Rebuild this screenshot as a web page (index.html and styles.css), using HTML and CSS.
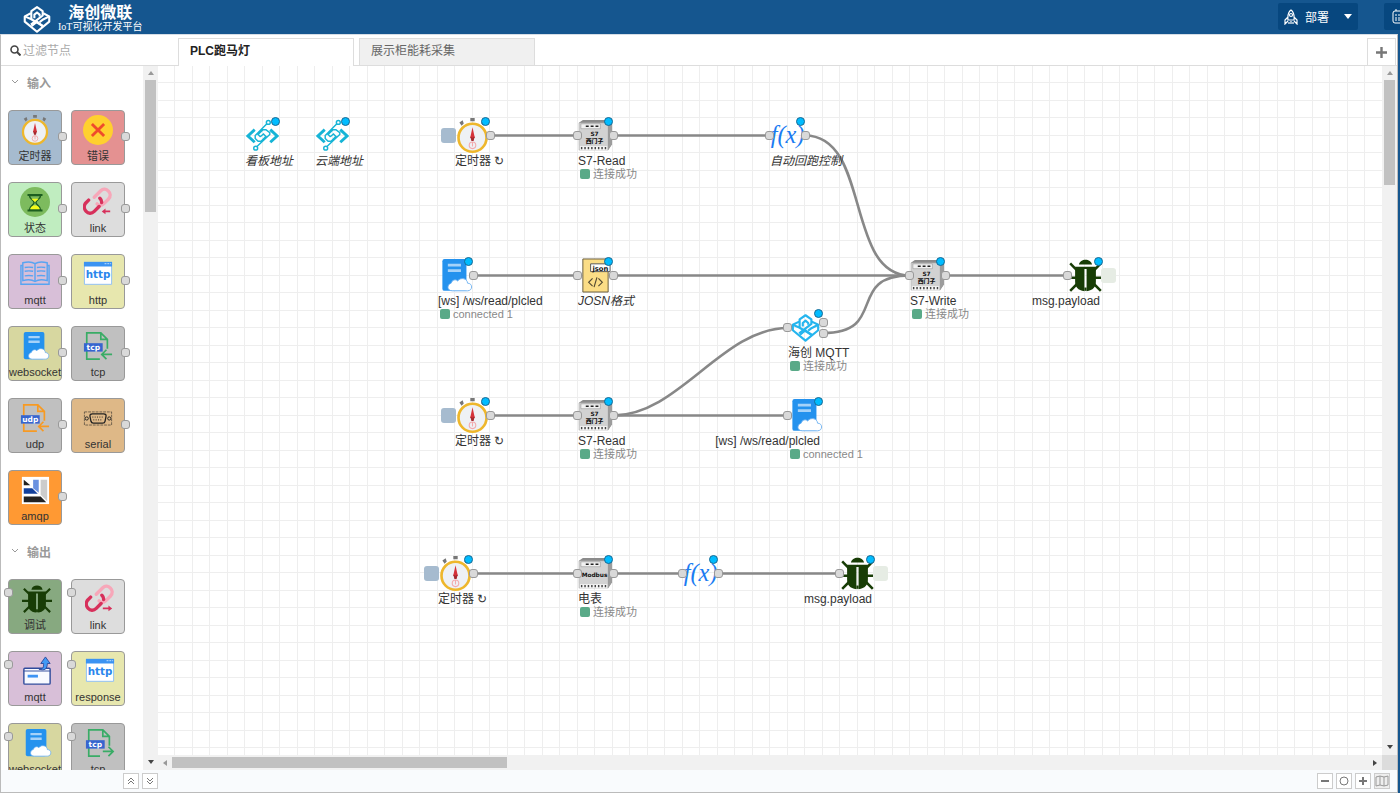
FILE: index.html
```html
<!DOCTYPE html>
<html lang="zh-CN">
<head>
<meta charset="utf-8">
<title>海创微联 IoT可视化开发平台</title>
<link rel="stylesheet" href="styles.css">
</head>
<body>
<svg class="sprite" width="0" height="0" aria-hidden="true">
  <symbol id="i-logo" viewBox="0 0 32 32"><g fill="none" stroke="currentColor" stroke-width="2.400" stroke-linejoin="round"><path d="M9 9.500L2 13v6l14 11.500L30 19v-6l-7-3.500"/><path d="M9.500 16V7L16 2.500 22.500 7v5L9 22.500"/><path d="M13 15v-4l3-2.500 3 2.500v2"/><path d="M2 13l7 3 14 8M30 13l-7 3.500-4 3"/><path d="M10 24l6-5 6.500 5.500"/></g></symbol>
  <symbol id="i-timer" viewBox="0 0 32 32"><path d="M14 0h4v3h-4z M4 4l3-2 1 3-2 2z M25 2l3 2-2 3-2-2z" fill="#777"/><circle cx="16" cy="18" r="12.800" fill="#eef1f5" stroke="#eeb72c" stroke-width="2.400"/><path d="M16 8.500l2 9-2 3-2-3z" fill="#d5323a"/><path d="M16 18l2-1-1 4h-2l-1-4z" fill="#a5292f"/><circle cx="16" cy="25" r="3" fill="none" stroke="#f3a9ac"/><path d="M16 22v4" stroke="#f3a9ac"/></symbol>
  <symbol id="i-error" viewBox="0 0 32 32"><circle cx="16" cy="16" r="16" fill="#ffd02f"/><path d="M9.500 9.500l13 13M22.500 9.500l-13 13" stroke="#ef4b2c" stroke-width="3"/></symbol>
  <symbol id="i-state" viewBox="0 0 32 32"><circle cx="16" cy="16" r="16" fill="#7dbb5e"/><path d="M10 9h12c0 4-5 5-5 7.500s5 4 5 8H10c0-4 5-5.500 5-8S10 13 10 9z" fill="#7dbb5e" stroke="#1d5e20" stroke-width="1.500"/><path d="M12 12.500h8L16 16zM11 24c0-4 5-4.500 5-4.500s5 .5 5 4.500z" fill="#f4fb18"/><path d="M8 8.500h16M8 25h16" stroke="#1d5e20" stroke-width="2"/></symbol>
  <symbol id="i-link" viewBox="0 0 32 32"><g fill="none" stroke-width="3.600" stroke-linecap="round"><path d="M12 11l7-7c5-5 14 3 8 9l-5 5c-2 2-5 2-7 0" stroke="#f7a7b9"/><path d="M6 14l-3 3c-5 6 3 15 9 9l6-6c3-3 2-6 0-8" stroke="#d7305b" stroke-dasharray="31 5 20"/></g></symbol>
  <symbol id="i-linkin" viewBox="0 0 32 32"><use href="#i-link"/><path d="M20 26l4-3v2h5v2h-5v2z" fill="#d7305b"/></symbol>
  <symbol id="i-linkout" viewBox="0 0 32 32"><use href="#i-link"/><path d="M29 26l-4-3v2h-6v2h6v2z" fill="#d7305b"/></symbol>
  <symbol id="i-book" viewBox="0 0 32 32"><g fill="none" stroke="#57a4f2" stroke-width="1.500"><path d="M16 5c-3-2-9-2-13-1v19c4-1 10-1 13 1 3-2 9-2 13-1V4c-4-1-10-1-13 1zM16 5v19"/><path d="M3 7H1v20h30V7h-2M5 9c3-.5 6-.5 9 0M5 13c3-.5 6-.5 9 0M5 18c3-.5 6-.5 9 0M18 9c3-.5 6-.5 9 0M18 13c3-.5 6-.5 9 0M18 18c3-.5 6-.5 9 0"/></g></symbol>
  <symbol id="i-http" viewBox="0 0 32 32"><path d="M1.500 4h29v23h-29z" fill="#fff" stroke="#8dbef5"/><path d="M1 3h30v5H1z" fill="#3b93f2"/><path d="M23 5h2M26 5h2M29 5h1" stroke="#c8e2ff"/><text class="t-http" x="16" y="20" text-anchor="middle">http</text></symbol>
  <symbol id="i-ws" viewBox="0 0 32 32"><rect x="4" y="1" width="22" height="29" rx="2" fill="#2492ee"/><path d="M9 6.500h12M9 11.500h12" stroke="#a5d2f9" stroke-width="2.600"/><path d="M13 30c-5 0-5-6-1-7 1-3 4-4 6-2 3-4 9-2 9 2 5 0 5 7 0 7z" fill="#fff" stroke="#67aef0" stroke-width=".8"/></symbol>
  <symbol id="i-file" viewBox="0 0 32 32"><path d="M26 19V9l-7-7H4v28h14M19 2v7h7M21 25h10M25 20l-5 5 5 5" fill="none" stroke="currentColor" stroke-width="1.800"/></symbol>
  <symbol id="i-fileout" viewBox="0 0 32 32"><path d="M26 19V9l-7-7H4v28h12M19 2v7h7M19 25h11M25 20l5 5-5 5" fill="none" stroke="currentColor" stroke-width="1.800"/></symbol>
  <symbol id="i-tcp" viewBox="0 0 32 32"><use href="#i-file" color="#39ac66"/><path d="M1 13h20v9H1z" fill="#3765cf"/><text class="t-tag" x="11" y="20" text-anchor="middle">tcp</text></symbol>
  <symbol id="i-tcpout" viewBox="0 0 32 32"><use href="#i-fileout" color="#39ac66"/><path d="M1 13h20v9H1z" fill="#3765cf"/><text class="t-tag" x="11" y="20" text-anchor="middle">tcp</text></symbol>
  <symbol id="i-udp" viewBox="0 0 32 32"><use href="#i-file" color="#f79a23"/><path d="M1 13h20v9H1z" fill="#3765cf"/><text class="t-tag" x="11" y="20" text-anchor="middle">udp</text></symbol>
  <symbol id="i-serial" viewBox="0 0 32 32"><g fill="none" stroke="#222"><path d="M1.500 9.500h29v14h-29z" stroke-width=".6" stroke-dasharray="3 1"/><path d="M10 11.500h12c2 0 3 1 2.500 3l-1 5c-.4 2-1 2-2.500 2H11c-1.500 0-2 0-2.500-2l-1-5c-.4-2 .5-3 2.500-3z" stroke-width="1.400"/><circle cx="4" cy="16.500" r="1.700"/><circle cx="28" cy="16.500" r="1.700"/><path d="M10 15h12M11 18h10" stroke-dasharray="1 1.500"/></g></symbol>
  <symbol id="i-amqp" viewBox="0 0 32 32"><path d="M2 2h29v29H2z" fill="#fff"/><path d="M4 5l7 6H4z" fill="#222"/><path d="M14 5h6v14l-6-5z" fill="#6b92e0"/><path d="M4 14h9l6 6H4z" fill="#12409c"/><path d="M22 5h7v23l-7-7z" fill="#ccc"/><path d="M4 23h18l6 6H4z" fill="#222"/></symbol>
  <symbol id="i-bug" viewBox="0 0 32 32"><g fill="#183d06"><path d="M10 6c1-6 11-6 12 0zM6.500 8H15v22.500c-6-1-8.500-4-8.500-9zM17 8h8.500v13.500c0 5-2.500 8-8.500 9zM13.500 8h5v2h-5z"/><path d="M15 27h2v3h-2z"/></g><path d="M8 11L2 5M24 11l6-6M8 18H0M24 18h8M8 24l-6 6M24 24l6 6" stroke="#183d06" stroke-width="2.300"/></symbol>
  <symbol id="i-mqttout" viewBox="0 0 32 32"><rect x="2" y="13" width="28" height="17" rx="1" fill="#f8faff" stroke="#304b9c" stroke-width="1.500"/><path d="M2 16h28" stroke="#304b9c"/><path d="M6 20h11v3H6z" fill="#3d93f3"/><path d="M18 14c5 0 5-2 5-6h-3l5-7 5 7h-3c0 6-3 8-9 6z" fill="#419af5" stroke="#304b9c"/></symbol>
  <symbol id="i-plc" viewBox="0 0 36 36"><path d="M1 5l4-3h28l2 3v22l-4 6H1z" fill="#8b8b8b"/><path d="M1 5h30v28H1z" fill="#d2d2d2" stroke="#aaa" stroke-width=".5"/><path d="M31 5l4-3v25l-4 6z" fill="#9c9c9c"/><path d="M3 6h20v5H3z" fill="#f1f1f1" stroke="#888" stroke-width=".5"/><path d="M8 8.500h3M13 8.500h3M18 8.500h3" stroke="#222" stroke-width="1.500"/><path d="M2 29h28v4H2z" fill="#f5f5f5"/><path d="M3 31h26" stroke="#444" stroke-width="2.400" stroke-dasharray="1.500 2"/></symbol>
  <symbol id="i-s7" viewBox="0 0 36 36"><use href="#i-plc"/><text class="t-plc" x="17" y="19" text-anchor="middle">S7</text><text class="t-plc" x="17" y="26" text-anchor="middle">西门子</text></symbol>
  <symbol id="i-modbus" viewBox="0 0 36 36"><use href="#i-plc"/><text class="t-plc" x="17" y="22" text-anchor="middle">Modbus</text></symbol>
  <symbol id="i-json" viewBox="0 0 36 36"><path d="M5 1h26v34H5z" fill="#fbdd86" stroke="#665a3c"/><path d="M13 6h20v8H13z" fill="#fff" stroke="#555"/><text class="t-json" x="23" y="13" text-anchor="middle">json</text><path d="M15 21l-4 4 4 4M21 21l4 4-4 4M19.500 20l-3 10" fill="none" stroke="#554b33" stroke-width="1.200"/></symbol>
  <symbol id="i-fx" viewBox="0 0 36 36"><text class="t-fx" x="18" y="26" text-anchor="middle">f(x)</text></symbol>
  <symbol id="i-board" viewBox="0 0 36 36"><g fill="none" stroke="#16b4d6" stroke-width="1.500"><path d="M10 12l-7 6.500L10 25M26 12l7 6.500L26 25" stroke-width="3"/><path d="M22.500 6L10.500 18v3l3 3h3l5-5-2.500-2.500L16 19M12 29.500L25.500 17v-2l-4-3h-3l-5 5 2.500 2.500"/><circle cx="24" cy="4.500" r="2"/><circle cx="11" cy="31" r="2"/></g></symbol>
  <symbol id="i-rocket" viewBox="0 0 14 16"><g fill="none" stroke="#fff" stroke-width="1.200"><path d="M7 1C4 3 3.500 6 4 11h6c.5-5 0-8-3-10zM4 8l-3 3v4l3-3M10 8l3 3v4l-3-3M5 13v2M9 13v2M7 12v3"/><circle cx="7" cy="6" r="1.500"/></g></symbol>
</svg>

<header class="topbar">
  <div class="brand">
    <svg class="brand-mark"><use href="#i-logo"/></svg>
    <div class="brand-text"><strong>海创微联</strong><span>IoT可视化开发平台</span></div>
  </div>
  <div class="actions">
    <button class="deploy" type="button"><svg class="rocket"><use href="#i-rocket"/></svg><span>部署</span><i class="caret"></i></button>
    <button class="side" type="button" aria-label="面板"><svg width="14" height="15" viewBox="0 0 14 15" fill="none" stroke="#fff"><rect x="1" y="2" width="12" height="12" rx="2"/><path d="M4 0v3M10 0v3M3 6h8M3 9h8M3 11h8" stroke-dasharray="2 1"/></svg></button>
  </div>
</header>

<main class="workbench">
  <aside class="palette">
    <label class="search"><svg width="11" height="11" viewBox="0 0 11 11" fill="none" stroke="#444"><circle cx="4.500" cy="4.500" r="3.500" stroke-width="1.600"/><path d="M7 7l3.500 3.500" stroke-width="2"/></svg><input type="text" placeholder="过滤节点" aria-label="过滤节点"></label>
    <div class="palette-body">
      <div class="palette-list">
        <h2><svg width="8" height="6" viewBox="0 0 8 6"><path d="M1 1l3 3 3-3"/></svg>输入</h2>
        <div class="tiles">
          <div class="tile out c-timer"><svg><use href="#i-timer"/></svg><span>定时器</span></div>
          <div class="tile out c-error"><svg><use href="#i-error"/></svg><span>错误</span></div>
          <div class="tile out c-state"><svg><use href="#i-state"/></svg><span>状态</span></div>
          <div class="tile out c-link"><svg><use href="#i-linkin"/></svg><span>link</span></div>
          <div class="tile out c-mqtt"><svg><use href="#i-book"/></svg><span>mqtt</span></div>
          <div class="tile out c-http"><svg><use href="#i-http"/></svg><span>http</span></div>
          <div class="tile out c-ws"><svg><use href="#i-ws"/></svg><span>websocket</span></div>
          <div class="tile out c-net"><svg><use href="#i-tcp"/></svg><span>tcp</span></div>
          <div class="tile out c-net"><svg><use href="#i-udp"/></svg><span>udp</span></div>
          <div class="tile out c-serial"><svg><use href="#i-serial"/></svg><span>serial</span></div>
          <div class="tile out c-amqp"><svg><use href="#i-amqp"/></svg><span>amqp</span></div>
        </div>
        <h2><svg width="8" height="6" viewBox="0 0 8 6"><path d="M1 1l3 3 3-3"/></svg>输出</h2>
        <div class="tiles outputs">
          <div class="tile in c-debug"><svg><use href="#i-bug"/></svg><span>调试</span></div>
          <div class="tile in c-link"><svg><use href="#i-linkout"/></svg><span>link</span></div>
          <div class="tile in c-mqtt"><svg><use href="#i-mqttout"/></svg><span>mqtt</span></div>
          <div class="tile in c-http"><svg><use href="#i-http"/></svg><span>response</span></div>
          <div class="tile in c-ws"><svg><use href="#i-ws"/></svg><span>websocket</span></div>
          <div class="tile in c-net"><svg><use href="#i-tcpout"/></svg><span>tcp</span></div>
        </div>
      </div>
      <div class="vbar"><i class="up"></i><b class="thumb-a"></b><i class="down"></i></div>
    </div>
    <footer class="bar">
      <button type="button" aria-label="全部折叠"><svg width="8" height="8" viewBox="0 0 8 8"><path d="M1 4l3-3 3 3M1 7l3-3 3 3"/></svg></button>
      <button type="button" aria-label="全部展开"><svg width="8" height="8" viewBox="0 0 8 8"><path d="M1 1l3 3 3-3M1 4l3 3 3-3"/></svg></button>
    </footer>
  </aside>

  <section class="editor">
    <nav class="tabs">
      <a class="tab active" href="#plc">PLC跑马灯</a>
      <a class="tab" href="#energy">展示柜能耗采集</a>
      <button class="add" type="button" aria-label="添加流程"><svg width="11" height="11" viewBox="0 0 11 11"><path d="M5.500 0v11M0 5.500h11" stroke="#777" stroke-width="2.400"/></svg></button>
    </nav>
    <div class="stage">
      <div class="canvas">
        <svg class="wires" viewBox="158 66 1224 689" width="1224" height="689">
          <path d="M490 135.500H578M613 135.500H770M473 275.500H578M613 275.500H910M945 275.500H1068M490 415.500H578M613 415.500H788M473 573.500H578M613 573.500H683M718 573.500H840"/>
          <path d="M805 135.500C871 135.500 845 275.500 910 275.500"/>
          <path d="M823 333C889 333 845 275.500 910 275.500"/>
          <path d="M613 415.500C679 415.500 722 328 788 328"/>
        </svg>

        <div class="node n-board1"><svg><use href="#i-board"/></svg><i class="dot"></i><em>看板地址</em></div>
        <div class="node n-board2"><svg><use href="#i-board"/></svg><i class="dot"></i><em>云端地址</em></div>
        <div class="node n-timer1"><i class="trigger"></i><svg><use href="#i-timer"/></svg><i class="port r"></i><i class="dot"></i><span>定时器 ↻</span></div>
        <div class="node n-read1"><svg><use href="#i-s7"/></svg><i class="port l"></i><i class="port r"></i><i class="dot"></i><span>S7-Read</span><small>连接成功</small></div>
        <div class="node n-fx1"><svg><use href="#i-fx"/></svg><i class="port l"></i><i class="port r"></i><i class="dot"></i><em>自动回跑控制</em></div>

        <div class="node n-ws1"><svg><use href="#i-ws"/></svg><i class="port r"></i><i class="dot"></i><span>[ws] /ws/read/plcled</span><small>connected 1</small></div>
        <div class="node n-json"><svg><use href="#i-json"/></svg><i class="port l"></i><i class="port r"></i><i class="dot"></i><em>JOSN格式</em></div>
        <div class="node n-write"><svg><use href="#i-s7"/></svg><i class="port l"></i><i class="port r"></i><i class="dot"></i><span>S7-Write</span><small>连接成功</small></div>
        <div class="node n-debug1"><i class="toggle"></i><svg><use href="#i-bug"/></svg><i class="port l"></i><i class="dot"></i><span class="end">msg.payload</span></div>

        <div class="node n-mqtt"><svg class="cyan"><use href="#i-logo"/></svg><i class="port l"></i><i class="port r first"></i><i class="port r second"></i><i class="dot"></i><span>海创 MQTT</span><small>连接成功</small></div>

        <div class="node n-timer2"><i class="trigger"></i><svg><use href="#i-timer"/></svg><i class="port r"></i><i class="dot"></i><span>定时器 ↻</span></div>
        <div class="node n-read2"><svg><use href="#i-s7"/></svg><i class="port l"></i><i class="port r"></i><i class="dot"></i><span>S7-Read</span><small>连接成功</small></div>
        <div class="node n-ws2"><svg><use href="#i-ws"/></svg><i class="port l"></i><i class="dot"></i><span class="end">[ws] /ws/read/plcled</span><small>connected 1</small></div>

        <div class="node n-timer3"><i class="trigger"></i><svg><use href="#i-timer"/></svg><i class="port r"></i><i class="dot"></i><span>定时器 ↻</span></div>
        <div class="node n-modbus"><svg><use href="#i-modbus"/></svg><i class="port l"></i><i class="port r"></i><i class="dot"></i><span>电表</span><small>连接成功</small></div>
        <div class="node n-fx2"><svg><use href="#i-fx"/></svg><i class="port l"></i><i class="port r"></i><i class="dot"></i></div>
        <div class="node n-debug2"><i class="toggle"></i><svg><use href="#i-bug"/></svg><i class="port l"></i><i class="dot"></i><span class="end">msg.payload</span></div>
      </div>
      <div class="vbar"><i class="up"></i><b class="thumb-b"></b><i class="down"></i></div>
      <div class="hbar"><i class="left"></i><b></b><i class="right"></i></div>
      <div class="corner"></div>
    </div>
    <footer class="bar zoom">
      <button type="button" aria-label="缩小"><svg width="10" height="10" viewBox="0 0 10 10"><path d="M1 5h8" class="thick"/></svg></button>
      <button type="button" aria-label="重置缩放"><svg width="10" height="10" viewBox="0 0 10 10"><circle cx="5" cy="5" r="4"/></svg></button>
      <button type="button" aria-label="放大"><svg width="10" height="10" viewBox="0 0 10 10"><path d="M1 5h8M5 1v8" class="thick"/></svg></button>
      <button type="button" class="map" aria-label="导航"><svg width="14" height="12" viewBox="0 0 14 12"><path d="M1 2l4-1 4 1 4-1v9l-4 1-4-1-4 1zM5 1v9M9 2v9"/></svg></button>
    </footer>
  </section>
</main>
</body>
</html>
```

FILE: styles.css
```css
*, *::before, *::after { box-sizing: border-box; }

body {
  margin: 0;
  height: 100vh;
  display: flex;
  flex-direction: column;
  overflow: hidden;
  background: #15568f;
  color: #333;
  font-family: "Liberation Sans", "Noto Sans CJK SC", sans-serif;
  font-size: 12px;
}

button { font: inherit; padding: 0; border: 0; }
.sprite { display: none; }

/* top bar */
.topbar {
  flex: none;
  height: 34px;
  padding-left: 23px;
  display: flex;
  justify-content: space-between;
  overflow: hidden;
  background: #15568f;
  color: #fff;
}
.brand { display: flex; align-items: center; gap: 7px; }
.brand-mark { width: 28px; height: 28px; margin-top: 3px; }
.brand-text { display: flex; flex-direction: column; align-items: center; }
.brand-text strong { font-size: 16px; line-height: 16px; margin-top: 3px; }
.brand-text span {
  font-family: "Liberation Serif", "Noto Sans CJK SC", serif;
  font-size: 10px;
  line-height: 12px;
}
.actions { display: flex; gap: 26px; margin: 3px -24px 4px 0; }
.actions button { background: #07477f; color: #fff; border-radius: 2px; display: flex; align-items: center; }
.deploy { width: 80px; padding: 0 6px; gap: 7px; }
.rocket { width: 14px; height: 16px; }
.caret { margin-left: auto; border: 4px solid transparent; border-top: 5px solid #fff; border-bottom: 0; }
.actions .side { width: 40px; padding-left: 8px; }

/* workbench */
.workbench {
  flex: 1;
  min-height: 0;
  display: flex;
  margin-right: 2px;
  background: #fff;
  border: 1px solid #bbb;
  border-top-color: #d5dde6;
}
.palette { flex: none; width: 157px; display: flex; flex-direction: column; }
.search {
  flex: none;
  height: 31px;
  padding: 1px 0 0 9px;
  display: flex;
  align-items: center;
  gap: 2px;
  border-bottom: 1px solid #ddd;
}
.search input { width: 110px; padding: 0; border: 0; outline: 0; background: none; font: inherit; }
.search input::placeholder { color: #aaa; }
.palette-body { flex: 1; min-height: 0; display: flex; }
.palette-list { flex: 1; overflow: hidden; }
.palette h2 {
  margin: 0;
  height: 32px;
  padding-left: 10px;
  display: flex;
  align-items: center;
  gap: 8px;
  color: #999;
  font-size: 12px;
}
.palette h2 svg { fill: none; stroke: #999; }
.tiles { display: grid; grid-template-columns: 54px 54px; gap: 17px 9px; padding: 12px 7px 10px; }
.tile {
  position: relative;
  height: 55px;
  display: flex;
  flex-direction: column;
  align-items: center;
  border: 1px solid #999;
  border-radius: 4px;
  font-size: 11px;
}
.tile svg { flex: none; width: 30px; height: 30px; margin-top: 4px; }
.outputs .tile svg { margin-left: 3px; }
.tile span { line-height: 14px; margin-top: 4px; }
.tile::after, .port {
  content: "";
  position: absolute;
  width: 9px;
  height: 9px;
  background: #d9d9d9;
  border: 1px solid #999;
  border-radius: 3px;
}
.out::after { right: -6px; top: 21px; }
.in::after { left: -5px; top: 8px; }
.c-timer { background: #a6bbcf; }
.c-error { background: #e49191; }
.c-state { background: #c0edc0; }
.c-link { background: #ddd; }
.c-mqtt { background: #d8bfd8; }
.c-http { background: #e7e7ae; }
.c-ws { background: #d7d7a0; }
.c-net { background: #c0c0c0; }
.c-serial { background: #deb887; }
.c-amqp { background: #ff9933; }
.c-debug { background: #87a980; }

/* icon lettering */
.t-http { font: bold 11px "DejaVu Sans", sans-serif; fill: #2a86ec; }
.t-tag { font: bold 8px "DejaVu Sans", sans-serif; fill: #fff; }
.t-plc { font: 900 6px "DejaVu Sans", "Noto Sans CJK SC", sans-serif; fill: #111; }
.t-json { font: bold 7px "DejaVu Sans", sans-serif; fill: #111; }
.t-fx { font: italic 25px "Liberation Serif", serif; fill: #1b7cf2; }

/* scroll bars */
.vbar, .hbar { display: flex; align-items: center; background: #f1f1f1; }
.vbar { flex: none; width: 15px; flex-direction: column; }
.vbar b { width: 11px; background: #c1c1c1; }
.vbar i, .hbar i { border: 3px solid transparent; }
.vbar .up { margin: 5px 0; border-bottom: 4px solid #999; border-top: 0; }
.vbar .down { margin: auto 0 6px; border-top: 4px solid #444; border-bottom: 0; }
.thumb-a { height: 132px; }
.thumb-b { height: 105px; }
.hbar .left { margin: 0 5px; border-right: 4px solid #999; border-left: 0; }
.hbar .right { margin: 0 5px 0 auto; border-left: 4px solid #444; border-right: 0; }
.hbar b { width: 335px; height: 11px; background: #c1c1c1; }
.corner { background: #dcdcdc; }

/* bottom bars */
.bar {
  flex: none;
  height: 22px;
  display: flex;
  justify-content: flex-end;
  align-items: center;
  gap: 3px;
  background: #f9fbfd;
}
.bar button {
  width: 16px;
  height: 16px;
  display: flex;
  align-items: center;
  justify-content: center;
  background: #fff;
  border: 1px solid #ccc;
}
.bar svg { fill: none; stroke: #777; flex: none; }
.bar .thick { stroke-width: 2; }
.zoom { padding-right: 7px; }
.bar .map { background: #eee; }
.map svg { stroke: #999; }

/* tabs */
.editor { flex: 1; min-width: 0; display: flex; flex-direction: column; }
.tabs { flex: none; height: 31px; padding: 3px 1px 0 20px; display: flex; gap: 5px; border-bottom: 1px solid #ddd; }
.tab {
  width: 176px;
  padding-left: 11px;
  line-height: 24px;
  border: 1px solid #ddd;
  border-bottom: 0;
  background: #f0f0f0;
  color: #666;
  text-decoration: none;
}
.tab.active { background: #fff; color: #222; font-weight: bold; margin-bottom: -1px; }
.add {
  width: 29px;
  margin-left: auto;
  display: flex;
  align-items: center;
  justify-content: center;
  background: #fff;
  border: 1px solid #ddd;
  border-bottom: 0;
}

/* flow canvas */
.stage { flex: 1; min-height: 0; display: grid; grid-template: minmax(0, 1fr) 15px / minmax(0, 1fr) 15px; }
.canvas {
  position: relative;
  overflow: hidden;
  background-color: #fff;
  background-image:
    linear-gradient(to right, #eee 1px, transparent 1px 17px, #eee 17px 18px, transparent 18px),
    linear-gradient(to bottom, #eee 1px, transparent 1px 17px, #eee 17px 18px, transparent 18px);
  background-size: 35px 35px;
  background-position: -1px -1px;
}
.wires { position: absolute; left: 0; top: 0; fill: none; stroke: #888; stroke-width: 2.6; }
.node { position: absolute; width: 35px; display: flex; flex-direction: column; align-items: flex-start; }
.node > svg { width: 35px; height: 35px; margin-bottom: 1px; }
.node > .cyan { color: #25b5ee; padding: 3px; }
.node span, .node em { line-height: 14px; white-space: nowrap; }
.node .end { align-self: flex-end; margin-right: 3px; }
.node small { display: flex; align-items: center; gap: 3px; margin-left: 2px; line-height: 12px; font-size: 11px; color: #888; white-space: nowrap; }
.node small::before { content: ""; width: 10px; height: 10px; border-radius: 2px; background: #5aaa88; }
.dot { position: absolute; left: 26px; top: -1px; width: 9px; height: 9px; border-radius: 50%; background: #00bcff; border: 1px solid #1a6a94; }
.port.l { left: -5px; top: 13px; }
.port.r { right: -5px; top: 13px; }
.port.r.first { top: 8px; }
.port.r.second { top: 19px; }
.trigger { position: absolute; left: -14px; top: 10px; width: 15px; height: 15px; border-radius: 3px; background: #a6bbcf; }
.toggle { position: absolute; right: -13px; top: 10px; width: 15px; height: 15px; border-radius: 3px; background: #e6ece4; }

.n-board1, .n-board2, .n-timer1, .n-read1, .n-fx1 { top: 52px; }
.n-ws1, .n-json, .n-write, .n-debug1 { top: 192px; }
.n-mqtt { top: 244px; }
.n-timer2, .n-read2, .n-ws2 { top: 332px; }
.n-timer3, .n-modbus, .n-fx2, .n-debug2 { top: 490px; }
.n-board1 { left: 87px; }
.n-board2 { left: 157px; }
.n-timer1, .n-timer2 { left: 297px; }
.n-ws1, .n-timer3 { left: 280px; }
.n-read1, .n-json, .n-read2, .n-modbus { left: 420px; }
.n-fx1 { left: 612px; }
.n-fx2 { left: 525px; }
.n-mqtt, .n-ws2 { left: 630px; }
.n-write { left: 752px; }
.n-debug1 { left: 910px; }
.n-debug2 { left: 682px; }
```
